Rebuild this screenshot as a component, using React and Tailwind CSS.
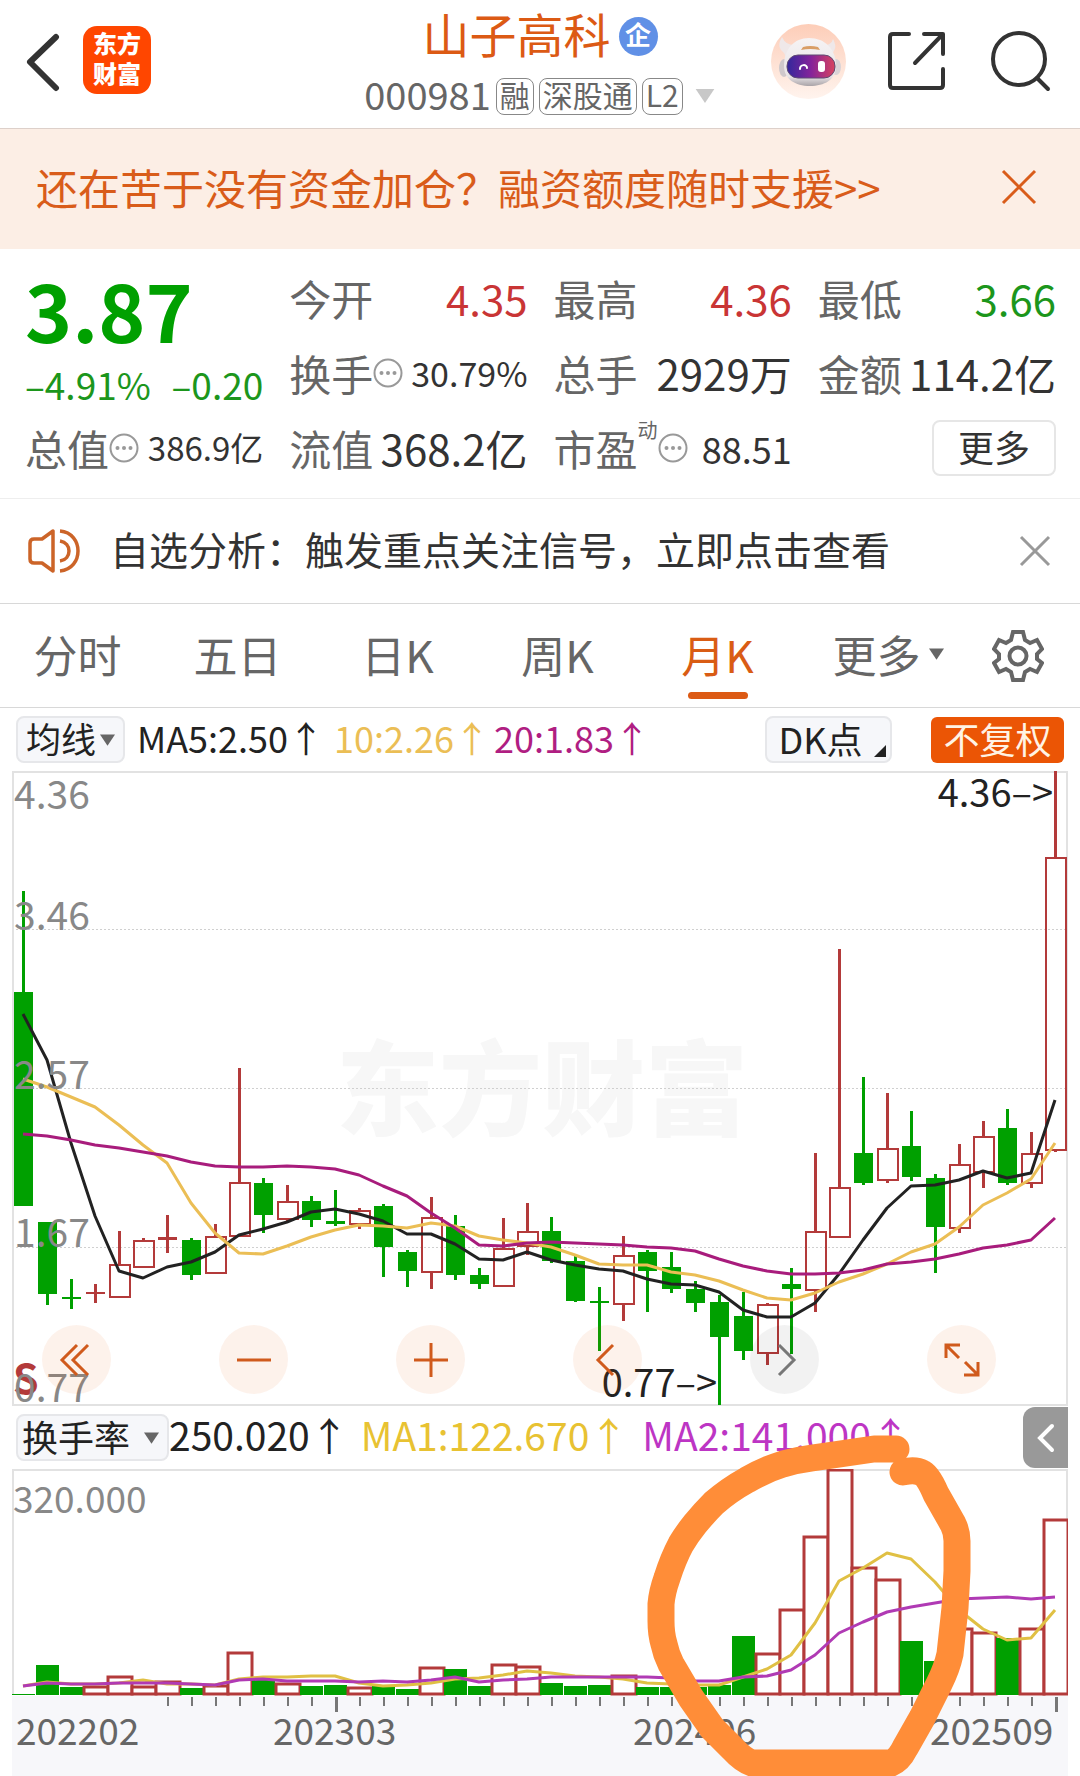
import React from "react";

const UP = "#b33a3a";
const DOWN = "#00a000";
const STEP = 24;
const FIRST = 11;

// [direction, high, body top, body bottom, low] for each month
const CANDLES = [
  ["d", 120, 221, 435, 435], ["d", 451, 451, 523, 534], ["d", 508, 526, 527, 538], ["u", 513, 521, 523, 532],
  ["u", 460, 494, 526, 527], ["u", 467, 470, 496, 497], ["u", 444, 466, 469, 482], ["d", 467, 469, 504, 509],
  ["u", 453, 466, 502, 502], ["u", 297, 412, 465, 465], ["d", 407, 412, 444, 462], ["u", 414, 431, 448, 450],
  ["d", 425, 430, 449, 456], ["d", 419, 450, 453, 455], ["u", 437, 440, 453, 458], ["d", 433, 435, 476, 506],
  ["d", 479, 481, 500, 516], ["u", 426, 447, 501, 518], ["d", 444, 455, 504, 509], ["d", 497, 504, 513, 518],
  ["u", 447, 478, 515, 516], ["u", 432, 461, 475, 484], ["d", 446, 460, 490, 492], ["d", 485, 490, 530, 531],
  ["d", 516, 530, 532, 580], ["u", 465, 485, 533, 550], ["d", 479, 481, 500, 541], ["d", 481, 496, 518, 522],
  ["d", 510, 518, 532, 541], ["d", 524, 531, 566, 634], ["d", 521, 545, 580, 589], ["u", 532, 534, 582, 594],
  ["d", 497, 513, 518, 583], ["u", 382, 461, 519, 541], ["u", 178, 417, 466, 466], ["d", 306, 382, 412, 414],
  ["u", 322, 378, 409, 412], ["d", 340, 375, 406, 410], ["d", 403, 407, 456, 502], ["u", 373, 394, 457, 462],
  ["u", 350, 366, 401, 417], ["d", 338, 357, 412, 414], ["u", 361, 383, 412, 417], ["u", 0, 87, 379, 381],
];

const MA5 = [243, 289, 372, 445, 500, 507, 496, 491, 481, 464, 458, 451, 441, 438, 443, 450, 463, 463, 473, 488, 489, 481, 489, 494, 498, 500, 508, 513, 514, 521, 539, 546, 546, 532, 503, 469, 437, 415, 414, 409, 400, 407, 402, 329];
const MA10 = [308, 316, 326, 336, 354, 374, 392, 432, 462, 482, 483, 475, 466, 459, 454, 455, 457, 452, 455, 465, 469, 472, 476, 484, 493, 494, 494, 501, 504, 510, 519, 527, 529, 522, 511, 503, 493, 481, 473, 456, 434, 422, 408, 372];
const MA20 = [363, 365, 369, 374, 377, 381, 385, 391, 395, 396, 396, 395, 396, 398, 404, 415, 425, 442, 457, 474, 475, 472, 471, 472, 473, 474, 476, 477, 480, 488, 495, 500, 503, 503, 502, 499, 493, 491, 488, 483, 477, 474, 469, 447];

const TURNOVER = [225, 196, 218, 218, 208, 218, 213, 219, 217, 184, 211, 215, 217, 216, 219, 216, 220, 199, 200, 217, 196, 198, 214, 217, 216, 207, 218, 218, 218, 216, 167, 185, 141, 68, 1, 99, 111, 172, 192, 160, 164, 169, 160, 51];
const TURN_MA1 = [217, 213, 215, 215, 214, 211, 215, 215, 216, 210, 208, 208, 207, 207, 214, 217, 216, 214, 210, 209, 206, 202, 204, 207, 208, 210, 214, 215, 216, 216, 208, 200, 186, 154, 112, 99, 84, 90, 113, 141, 160, 171, 169, 141];
const TURN_MA2 = [217, 214, 215, 215, 214, 214, 214, 215, 216, 211, 210, 212, 212, 212, 213, 212, 213, 211, 208, 213, 211, 210, 208, 208, 208, 208, 208, 209, 212, 212, 208, 207, 201, 186, 164, 153, 143, 138, 134, 130, 129, 128, 130, 128];

// months whose close rose on the month before although the candle itself fell
const ROSE = [32, 35];

const at = (k) => FIRST + k * STEP;
const line = (ys) => ys.map((y, k) => `${at(k)},${y}`).join(" ");

function Candle({ k, data }) {
  const [dir, high, top, bottom, low] = data;
  const x = at(k);
  if (dir === "d" || bottom - top < 4) {
    const color = dir === "d" ? DOWN : UP;
    return (
      <g fill={color}>
        <rect x={x - 1} y={high} width="3" height={low - high} />
        <rect x={x - 9} y={top} width="19" height={Math.max(2, bottom - top)} />
      </g>
    );
  }
  return (
    <g fill={UP}>
      <rect x={x - 1} y={high} width="3" height={top - high} />
      <rect x={x - 1} y={bottom} width="3" height={low - bottom} />
      <rect x={x - 9} y={top} width="20" height={bottom - top} fill="none" stroke={UP} strokeWidth="2" />
    </g>
  );
}

function PriceChart() {
  return (
    <svg viewBox="0 0 1056 635" className="block w-full overflow-visible" role="img" aria-label="月K线图">
      <text x="324" y="357" fontSize="103" fontWeight="900" fill="#f7f7f7">东方财富</text>
      <g stroke="#d0d0d0" strokeDasharray="2 2">
        <path d="M0 158.5H1056M0 317.5H1056M0 476.5H1056" />
      </g>
      <path d="M1 1H1055V634H1Z" fill="none" stroke="#e2e2e2" strokeWidth="2" />
      <text x="1" y="623" fontSize="41" fontWeight="700" fill={UP}>S</text>
      {CANDLES.map((c, k) => <Candle key={k} k={k} data={c} />)}
      <g fill="none" strokeWidth="3" strokeLinejoin="round">
        <polyline points={line(MA5)} stroke="#222" />
        <polyline points={line(MA10)} stroke="#ebbe55" />
        <polyline points={line(MA20)} stroke="#a81c7c" />
      </g>
      <g fontSize="39" fill="#888">
        <text x="2" y="38">4.36</text>
        <text x="2" y="159">3.46</text>
        <text x="2" y="318">2.57</text>
        <text x="2" y="476">1.67</text>
        <text x="2" y="631">0.77</text>
      </g>
      <g fontSize="38" fill="#222" textAnchor="end">
        <text x="1041" y="36">4.36–&gt;</text>
        <text x="705" y="626">0.77–&gt;</text>
      </g>
    </svg>
  );
}

function TurnoverChart() {
  const months = [["202202", 4], ["202303", 261], ["202406", 621], ["202509", 918]];
  return (
    <svg viewBox="0 0 1056 307" className="block w-full" role="img" aria-label="换手率">
      <rect x="0" y="227" width="1056" height="80" fill="#f7f7fa" />
      <path d="M1 226V1H1055V226" fill="none" stroke="#e2e2e2" strokeWidth="2" />
      <text x="1" y="44" fontSize="37" fill="#888">320.000</text>
      {TURNOVER.map((y, k) =>
        CANDLES[k][0] === "d" && !ROSE.includes(k) ? (
          <rect key={k} x={at(k) - 11} y={y} width="23" height={226 - y} fill={DOWN} />
        ) : (
          <rect key={k} x={at(k) - 11} y={y} width="24" height={225 - y} fill="#fff" stroke={UP} strokeWidth="3" />
        )
      )}
      <g fill="none" strokeWidth="3" strokeLinejoin="round">
        <polyline points={line(TURN_MA1)} stroke="#e0c044" />
        <polyline points={line(TURN_MA2)} stroke="#b03ab4" />
      </g>
      <g fill="#777">
        {TURNOVER.map((_, k) => {
          if (k < 6) return null;
          const major = k === 13 || k === 28 || k === 43;
          return <rect key={k} x={at(k)} y="228" width={major ? 3 : 2} height={major ? 15 : 9} />;
        })}
      </g>
      <g fontSize="37" fill="#666">
        {months.map(([m, x]) => <text key={m} x={x} y="276">{m}</text>)}
      </g>
    </svg>
  );
}

function Dots() {
  return (
    <svg viewBox="0 0 30 30" className="h-[30px] w-[30px] shrink-0" fill="none" aria-hidden="true">
      <circle cx="15" cy="15" r="13.5" stroke="#999" strokeWidth="2" />
      <g fill="#999"><circle cx="8.5" cy="15" r="2" /><circle cx="15" cy="15" r="2" /><circle cx="21.5" cy="15" r="2" /></g>
    </svg>
  );
}

function Caret({ className }) {
  return (
    <svg viewBox="0 0 16 12" className={className} fill="currentColor" aria-hidden="true">
      <path d="M0 0H16L8 12Z" />
    </svg>
  );
}

function Robot() {
  return (
    <svg viewBox="0 0 75 75" className="h-[75px] w-[75px]" aria-hidden="true">
      <defs>
        <linearGradient id="halo" x1="0" y1="0" x2="0" y2="1"><stop offset="0" stopColor="#fdcdb8" /><stop offset="1" stopColor="#fff4ee" /></linearGradient>
        <linearGradient id="shell" x1="0" y1="0" x2="0" y2="1"><stop offset="0" stopColor="#f6f3f4" /><stop offset=".8" stopColor="#e9e5e7" /><stop offset="1" stopColor="#aaa4a8" /></linearGradient>
        <linearGradient id="visor" x1="0" y1="0" x2="1" y2="0"><stop offset="0" stopColor="#33289c" /><stop offset=".5" stopColor="#85239a" /><stop offset="1" stopColor="#d8435f" /></linearGradient>
      </defs>
      <circle cx="37.500" cy="37.500" r="37.500" fill="url(#halo)" />
      <path d="M11 13Q6 21 10 26Q14 29 15 33L25 21Q15 22 11 13ZM62 15Q66 22 63 27L59 31L52 21Q60 22 62 15Z" fill="#efe8e9" />
      <ellipse cx="13" cy="44" rx="5" ry="9" fill="#cfc8cb" />
      <ellipse cx="65" cy="43" rx="5" ry="8" fill="#d9d3d6" />
      <path d="M38 14C54 14 65 25 65 42C65 56 53 62 39 62C24 62 13 55 13 42C13 25 23 14 38 14Z" fill="url(#shell)" />
      <path d="M30 26L32 23Q39 21 47 23L49 26Q39 24 30 26Z" fill="#d99e66" />
      <rect x="16" y="31" width="48" height="23" rx="11" fill="url(#visor)" stroke="#5f4a72" />
      <path d="M29 45C29 40 36 40 36 44" fill="none" stroke="#fff" strokeWidth="2" strokeLinecap="round" />
      <rect x="47" y="37" width="7" height="11" rx="3" fill="#fff" />
    </svg>
  );
}

function Quote({ label, value, info, sup, tone = "text-[#333]", size = "text-[42px]" }) {
  return (
    <div className="flex h-[75px] items-center justify-between pb-1 whitespace-nowrap leading-none">
      <dt className="flex items-center text-[42px] text-[#666]">
        {label}
        {sup && <span className="-mt-9 text-[20px]">{sup}</span>}
        {info && <Dots />}
      </dt>
      <dd className={`${size} ${tone}`}>{value}</dd>
    </div>
  );
}

function RoundButton({ label, d, muted }) {
  return (
    <button
      aria-label={label}
      className={`flex h-[69px] w-[69px] items-center justify-center rounded-full ${muted ? "bg-black/5 text-[#777]" : "bg-[#eb5505]/8 text-[#d05a1c]"}`}
    >
      <svg viewBox="0 0 40 40" className="h-10 w-10" fill="none" stroke="currentColor" strokeWidth="3"><path d={d} /></svg>
    </button>
  );
}

const TAGS = ["融", "深股通", "L2"];
const TABS = ["分时", "五日", "日K", "周K", "月K"];

export default function App() {
  return (
    <main className="w-full overflow-hidden bg-white font-['Noto_Sans_CJK_SC',sans-serif] text-[#222]">
      <header className="grid h-[129px] grid-cols-[1fr_auto_1fr] items-center border-b border-[#ddd0ca]">
        <div className="flex items-center pb-1 pl-6">
          <button aria-label="返回" className="h-[60px] w-[38px]">
            <svg viewBox="0 0 38 60" className="h-full w-full" fill="none" stroke="#333" strokeWidth="6" strokeLinecap="round" strokeLinejoin="round"><path d="M32 5L6 30L32 56" /></svg>
          </button>
          <div className="mb-1 ml-[21px] flex h-[68px] w-[68px] flex-col items-center justify-center rounded-[14px] bg-[#ff4600] pb-1 text-[24px] leading-[30px] font-black text-white">
            <span>东方</span>
            <span>财富</span>
          </div>
        </div>
        <div className="flex flex-col items-center">
          <div className="flex h-[68px] items-center gap-2 pb-1 text-[47px] leading-none text-[#dc5a14]">
            <h1 className="pb-2">山子高科</h1>
            <span className="flex h-[39px] w-[39px] items-center justify-center rounded-full bg-[#6090e6] pb-1 text-[26px] font-bold text-white">企</span>
          </div>
          <div className="flex h-[52px] items-center gap-[5px] pb-1 text-[38px] leading-none text-[#666]">
            <span className="pb-1">000981</span>
            {TAGS.map((t) => (
              <span key={t} className="flex h-[37px] items-center rounded-lg border border-[#888] px-[3px] pb-1 text-[30px]">{t}</span>
            ))}
            <Caret className="ml-1.5 h-[14px] w-[22px] text-[#c8c8c8]" />
          </div>
        </div>
        <div className="flex items-center justify-end pr-[29px] pb-1.5 text-[#333]">
          <button aria-label="智能助手"><Robot /></button>
          <button aria-label="分享" className="ml-[41px]">
            <svg viewBox="0 0 60 60" className="h-[60px] w-[60px]" fill="none" stroke="currentColor" strokeWidth="4" strokeLinecap="round" strokeLinejoin="round">
              <path d="M22 3H6Q3 3 3 6V54Q3 57 6 57H53Q56 57 56 54V38M37 3H56V23M55 4L28 32" />
            </svg>
          </button>
          <button aria-label="搜索" className="ml-[42px]">
            <svg viewBox="0 0 62 62" className="h-[62px] w-[62px]" fill="none" stroke="currentColor" strokeWidth="4" strokeLinecap="round">
              <circle cx="30" cy="29" r="26" /><path d="M48 48L59 59" />
            </svg>
          </button>
        </div>
      </header>

      <aside className="flex h-[120px] items-center justify-between bg-[#fceee5] pr-[43px] pl-9 text-[#d95c1a]">
        <a href="#margin" className="pb-1 text-[42px] leading-none whitespace-nowrap">还在苦于没有资金加仓？融资额度随时支援&gt;&gt;</a>
        <button aria-label="关闭广告" className="pb-1">
          <svg viewBox="0 0 36 36" className="h-9 w-9" fill="none" stroke="currentColor" strokeWidth="3"><path d="M2 2L34 34M34 2L2 34" /></svg>
        </button>
      </aside>

      <dl className="grid grid-cols-4 gap-x-[26px] border-b border-[#eee] pt-[13px] pr-6 pb-[11px] pl-[25px]">
        <div className="row-span-2 whitespace-nowrap leading-none">
          <dt className="flex h-[96px] items-center pb-1 text-[80px] font-bold text-[#00a000]">3.87</dt>
          <dd className="flex h-[52px] items-center justify-between text-[37px] text-[#1c961c]"><span>–4.91%</span><span>–0.20</span></dd>
        </div>
        <Quote label="今开" value="4.35" tone="text-[#c93535]" />
        <Quote label="最高" value="4.36" tone="text-[#c93535]" />
        <Quote label="最低" value="3.66" tone="text-[#1c961c]" />
        <Quote label="换手" value="30.79%" info size="text-[34px]" />
        <Quote label="总手" value="2929万" />
        <Quote label="金额" value="114.2亿" />
        <Quote label="总值" value="386.9亿" info size="text-[33px]" />
        <Quote label="流值" value="368.2亿" />
        <Quote label="市盈" value="88.51" info sup="动" size="text-[36px]" />
        <div className="flex h-[75px] items-center justify-end pb-1">
          <button className="h-[56px] w-[124px] rounded-lg border-2 border-[#e6e6e6] pb-1 text-[36px] leading-none text-[#333]">更多</button>
        </div>
      </dl>

      <section className="flex h-[105px] items-center border-b border-[#d8d8d8] pr-[28px] pl-[28px]">
        <svg viewBox="0 0 54 46" className="h-[46px] w-[54px]" fill="none" stroke="#cc6428" strokeWidth="3.500" aria-hidden="true">
          <path d="M25 3V43L14 35H6Q2 35 2 31V15Q2 11 6 11H14Z" strokeLinejoin="round" />
          <path d="M32 13C44 15 44 31 32 33M32 3C56 5 56 41 32 43" />
        </svg>
        <p className="ml-7 flex-1 pb-1.5 text-[39px] leading-none whitespace-nowrap text-[#333]">自选分析：触发重点关注信号，立即点击查看</p>
        <button aria-label="关闭提示">
          <svg viewBox="0 0 34 34" className="h-[34px] w-[34px]" fill="none" stroke="#999" strokeWidth="3"><path d="M3 3L31 31M31 3L3 31" /></svg>
        </button>
      </section>

      <nav className="grid h-[104px] grid-cols-[repeat(6,4fr)_3fr] border-b border-[#d8d8d8] text-[44px] leading-none text-[#666]">
        {TABS.map((t) => (
          <button key={t} className={`relative mr-[5px] pb-1 ${t === "月K" ? "text-[#d95c14]" : ""}`}>
            {t}
            {t === "月K" && <span className="absolute bottom-2 left-1/2 h-[7px] w-[60px] -translate-x-1/2 rounded-full bg-[#dc5a14]" />}
          </button>
        ))}
        <button className="flex items-center justify-center gap-2 pb-1 pl-4">更多<Caret className="h-[12px] w-[15px]" /></button>
        <button aria-label="设置" className="flex items-center justify-center pr-1">
          <svg viewBox="0 0 52 52" className="h-[52px] w-[52px]" fill="none" stroke="currentColor" strokeWidth="4">
            <path d="M21 2H31L33 10L38 13L45 10L50 19L45 24V29L50 33L45 42L38 39L33 42L31 50H21L19 42L14 39L7 42L2 33L7 29V24L2 19L7 10L14 13L19 10Z" />
            <circle cx="26" cy="26" r="8.500" />
          </svg>
        </button>
      </nav>

      <div className="flex h-[63px] items-center pr-4 pl-4 text-[36px] leading-none whitespace-nowrap">
        <button className="flex h-[47px] w-[109px] items-center justify-center gap-1 rounded-lg border-2 border-[#e6e7ea] bg-[#f6f7fa] text-[35px]">
          <span className="pb-1">均线</span><Caret className="h-[12px] w-[15px] text-[#666]" />
        </button>
        <span className="ml-3 pb-1.5">MA5:2.50↑</span>
        <span className="ml-2.5 pb-1.5 text-[#ebbe55]">10:2.26↑</span>
        <span className="ml-1 pb-1.5 text-[#b01e82]">20:1.83↑</span>
        <button className="relative ml-auto h-[47px] w-[127px] rounded-lg border-2 border-[#e6e7ea] bg-[#f6f7fa] pr-4 pb-1">
          DK点
          <svg viewBox="0 0 12 12" className="absolute right-1 bottom-1 h-3 w-3" aria-hidden="true"><path d="M12 0V12H0Z" fill="#222" /></svg>
        </button>
        <button className="ml-[39px] h-[46px] w-[133px] rounded-md bg-[#eb5505] pb-1 text-[#fff3e4]">不复权</button>
      </div>

      <div className="relative mr-3 ml-3">
        <PriceChart />
        <div className="absolute right-[72px] bottom-[12px] left-[30px] flex justify-between">
          <RoundButton label="最早" d="M20 5L5 20L20 35M31 5L16 20L31 35" />
          <RoundButton label="缩小" d="M3 20H37" />
          <RoundButton label="放大" d="M3 20H37M20 3V37" />
          <RoundButton label="左移" d="M25 5L10 20L25 35" />
          <RoundButton label="右移" d="M14 5L29 20L14 35" muted />
          <RoundButton label="全屏" d="M4 18V5H18M5 6L17 18M36 22V35H22M35 34L23 22" />
        </div>
      </div>

      <section className="relative">
        <div className="flex h-[63px] items-center pr-3 pl-4 text-[39px] leading-none whitespace-nowrap">
          <button className="flex h-[47px] w-[153px] items-center justify-between rounded-lg border-2 border-[#e6e7ea] bg-[#f6f7fa] pr-2 pl-1 text-[36px]">
            <span className="pb-1">换手率</span><Caret className="h-[12px] w-[15px] text-[#666]" />
          </button>
          <span className="pb-1.5">250.020↑</span>
          <span className="ml-3 pb-1.5 text-[#e8c232]">MA1:122.670↑</span>
          <span className="ml-3.5 pb-1.5 text-[#bd35c4]">MA2:141.000↑</span>
          <button aria-label="收起" className="ml-auto flex h-[61px] w-[45px] items-center justify-center rounded-l-xl bg-[#999]">
            <svg viewBox="0 0 20 30" className="h-[30px] w-5" fill="none" stroke="#fff" strokeWidth="4" strokeLinecap="round"><path d="M16 3L4 15L16 27" /></svg>
          </button>
        </div>
        <div className="mr-3 ml-3"><TurnoverChart /></div>
        <svg viewBox="0 0 1080 370" className="pointer-events-none absolute inset-0 h-full w-full" fill="none" aria-hidden="true">
          <path
            d="M896 43L874 43L833 49L812 52Q797 54 783 58Q764 64 747 74Q729 84 714 97Q704 107 695 118Q687 128 681 138Q673 153 667 172Q662 186 661 198V215Q661 228 664 238Q666 248 671 258L691 292L712 322L733 343Q743 354 752 357H891Q899 354 905 342L922 312L939 278Q947 262 950 248L955 202L957 165V135Q957 126 953 118L936 88Q928 69 922 67Q915 63 903 66"
            stroke="#ff8d38" strokeWidth="27" strokeLinecap="round" strokeLinejoin="round"
          />
        </svg>
      </section>
    </main>
  );
}
